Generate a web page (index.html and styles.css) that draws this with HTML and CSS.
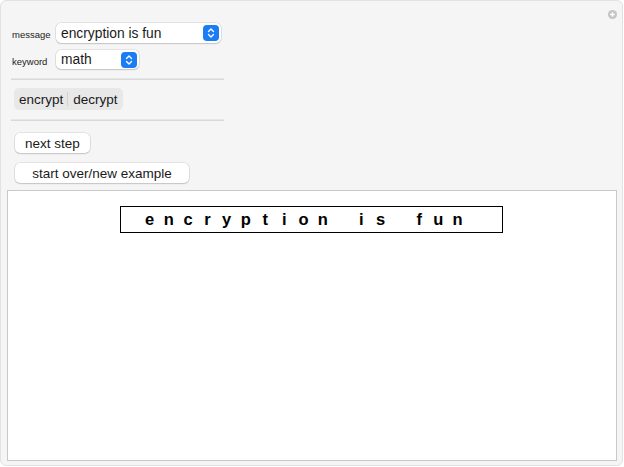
FILE: index.html
```html
<!DOCTYPE html>
<html>
<head>
<meta charset="utf-8">
<link rel="stylesheet" href="styles.css">
</head>
<body>
<div class="app">
  <span class="plus-btn"><svg width="9" height="9" viewBox="0 0 9 9"><circle cx="4.5" cy="4.5" r="4.5" fill="#c4c4c4"/><path d="M4.5 2.2v4.6M2.2 4.5h4.6" stroke="#fff" stroke-width="1.4"/></svg></span>
  <div class="controls">
    <div class="fields">
      <span class="label">message</span>
      <div class="select wide"><span>encryption is fun</span><span class="arrows"><svg width="10" height="12" viewBox="0 0 10 12"><path d="M2.5 4.5L5 2l2.5 2.5M2.5 7.5L5 10l2.5-2.5" fill="none" stroke="#fff" stroke-width="1.4" stroke-linecap="round" stroke-linejoin="round"/></svg></span></div>
      <span class="label">keyword</span>
      <div class="select narrow"><span>math</span><span class="arrows"><svg width="10" height="12" viewBox="0 0 10 12"><path d="M2.5 4.5L5 2l2.5 2.5M2.5 7.5L5 10l2.5-2.5" fill="none" stroke="#fff" stroke-width="1.4" stroke-linecap="round" stroke-linejoin="round"/></svg></span></div>
    </div>
    <div class="sep"></div>
    <div class="segmented"><span class="seg">encrypt</span><span class="divider"></span><span class="seg">decrypt</span></div>
    <div class="sep second"></div>
    <button class="btn">next step</button>
    <button class="btn long">start over/new example</button>
  </div>
  <div class="panel">
    <div class="word"><span>e</span><span>n</span><span>c</span><span>r</span><span>y</span><span>p</span><span>t</span><span>i</span><span>o</span><span>n</span><span> </span><span>i</span><span>s</span><span> </span><span>f</span><span>u</span><span>n</span></div>
  </div>
</div>
</body>
</html>
```
FILE: styles.css
```css
* { box-sizing: border-box; }
html, body { margin: 0; padding: 0; background: #ffffff; }
body { font-family: "Liberation Sans", Arial, sans-serif; color: #1a1a1a; }
.app {
  position: relative;
  width: 623px;
  height: 466px;
  border: 1px solid #e2e2e2;
  border-radius: 6px;
  background: #f5f5f5;
  display: flex;
  flex-direction: column;
}
.plus-btn { position: absolute; left: 607px; top: 9px; display: block; line-height: 0; }
.controls { padding: 22px 0 0 9px; display: flex; flex-direction: column; align-items: flex-start; height: 189px; }
.fields {
  display: grid;
  grid-template-columns: 46px auto;
  row-gap: 7px;
  align-items: center;
  justify-items: start;
}
.label { font-size: 9.5px; color: #222; padding-left: 2px; padding-top: 3px; }
.label:nth-of-type(3) { padding-left: 3px; }
.select {
  height: 20px;
  background: #fff;
  border-radius: 5px;
  box-shadow: 0 0 0 0.5px rgba(0,0,0,0.14), 0 1px 1.5px rgba(0,0,0,0.14);
  display: flex;
  align-items: center;
  justify-content: space-between;
  padding: 0 2px 0 5px;
  font-size: 13.8px;
  color: #1a1a1a;
}
.select.wide { width: 165px; }
.select.narrow { width: 83px; height: 19px; }
.arrows {
  width: 16px; height: 16px; border-radius: 4px;
  background: #1b7cf4;
  display: flex; align-items: center; justify-content: center;
}
.sep { width: 213px; height: 2px; margin: 9px 0 0 1px; border-bottom: 1px solid #d9d9d9; background: #e6e6e6; }
.segmented {
  margin: 8px 0 0 4px;
  height: 22px;
  width: 109px;
  background: #e8e8e8;
  border-radius: 5px;
  display: flex; align-items: center;
  padding: 0 4px 0 5px;
  font-size: 13.5px;
}
.divider { width: 1px; height: 14px; background: #d2d2d2; margin: 0 5px 0 4px; }
.sep.second { margin-top: 9px; }
.btn {
  font-family: inherit;
  font-size: 13.5px;
  color: #1a1a1a;
  background: #fff;
  border: none;
  border-radius: 5px;
  box-shadow: 0 0 0 0.5px rgba(0,0,0,0.14), 0 1px 1.5px rgba(0,0,0,0.14);
  height: 20px;
  width: 75px;
  margin: 12px 0 0 5px;
  padding: 0;
}
.btn.long { width: 174px; margin-top: 10px; }
.panel {
  margin: 0 5px 0 6px;
  height: 271px;
  background: #fff;
  border: 1px solid #c9c9c9;
  padding: 15px 0 0 112px;
}
.word {
  width: 383px; height: 27px;
  border: 1px solid #000;
  display: flex; align-items: center;
  padding-left: 19px;
  font-weight: bold; font-size: 16.5px; color: #000;
}
.word span { width: 19.25px; text-align: center; white-space: pre; }
```
